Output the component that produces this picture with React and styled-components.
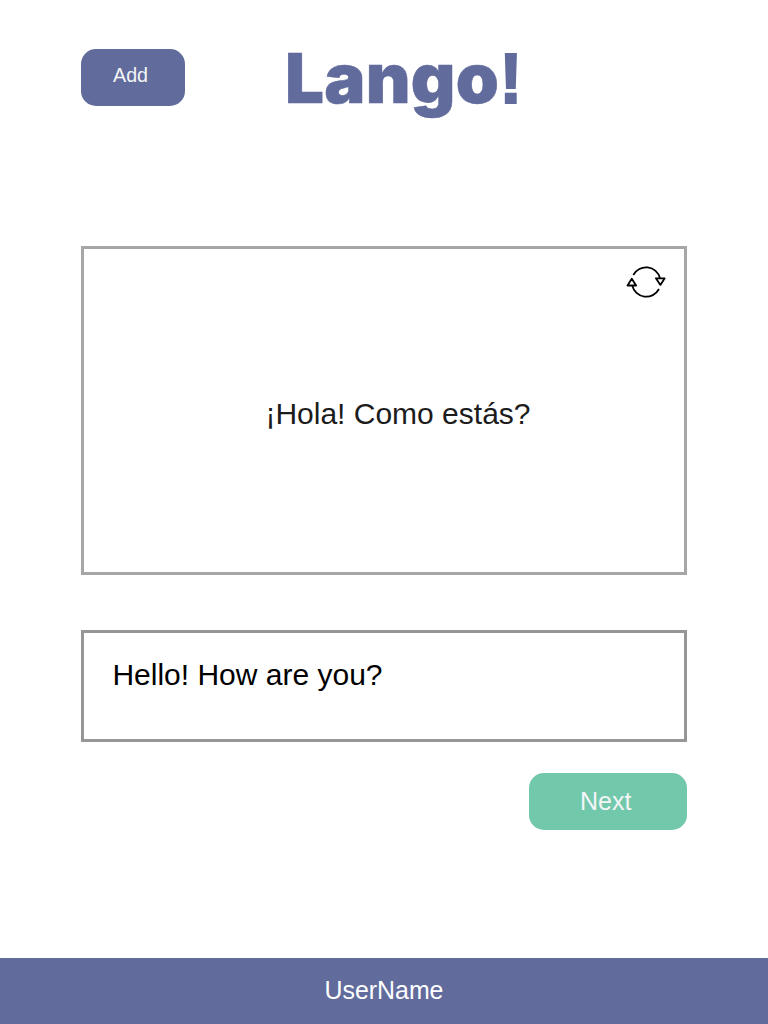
import React from "react";
import styled, { createGlobalStyle } from "styled-components";

const indigo = "#616b9c";
const mint = "#72c8ab";

const GlobalStyle = createGlobalStyle`
  *, *::before, *::after { box-sizing: border-box; }
  body { margin: 0; background: #fff; font-family: "Liberation Sans", Helvetica, Arial, sans-serif; }
  button { font-family: inherit; }
`;

const Screen = styled.div`
  display: flex;
  flex-direction: column;
  width: 768px;
  height: 1024px;
  background: #fff;
`;

const Header = styled.header`
  display: flex;
  align-items: flex-start;
  height: 246px;
  padding: 49px 81px 0;
`;

const Button = styled.button`
  display: flex;
  justify-content: flex-start;
  align-items: flex-start;
  width: ${(p) => p.$width}px;
  height: 57px;
  padding: ${(p) => p.$padding};
  border: 0;
  border-radius: 15px;
  background: ${(p) => p.$color};
  color: #f4f5f7;
  font-size: ${(p) => p.$size}px;
  line-height: 28px;
  white-space: nowrap;
`;

const Logo = styled.h1`
  margin: -13px 0 0 99.5px;
  color: ${indigo};
  font-family: Inter, sans-serif;
  font-size: 69px;
  font-weight: 900;
  line-height: 84px;
  letter-spacing: 0.3px;
  white-space: nowrap;
  -webkit-text-stroke: 0.5px ${indigo};
`;

const Bang = styled.span`
  font-family: "Liberation Sans", Arial, sans-serif;
  font-size: 70px;
  font-weight: 700;
  line-height: 1;
  -webkit-text-stroke: 2px ${indigo};
`;

const Main = styled.main`
  display: flex;
  flex-direction: column;
  flex: 1;
  padding: 0 81px;
`;

const PromptCard = styled.section`
  display: flex;
  flex-direction: column;
  height: 329px;
  margin-left: 0.4px;
  border: 3px solid #a6a6a6;
`;

const FlipButton = styled.button`
  align-self: flex-end;
  width: 40px;
  height: 34px;
  margin: 16px 18px 0 0;
  padding: 0;
  border: 0;
  background: none;

  svg { display: block; }
`;

const Phrase = styled.p`
  margin: 98px 0 0 181px;
  color: #1c1c1c;
  font-size: 30px;
  line-height: 34px;
  white-space: nowrap;
`;

const AnswerBox = styled.section`
  height: 112px;
  margin-top: 55px;
  padding: 25px 28.4px;
  border: 3px solid #969696;
  color: #000;
  font-size: 30px;
  line-height: 34px;
  white-space: nowrap;
`;

const Actions = styled.div`
  display: flex;
  justify-content: flex-end;
  margin-top: 31px;
`;

const Footer = styled.footer`
  display: flex;
  justify-content: center;
  height: 66px;
  padding-top: 18px;
  background: ${indigo};
  color: #fff;
  font-size: 24.9px;
  line-height: 29px;
`;

function FlipIcon() {
  return (
    <svg width="40" height="34" viewBox="0 0 40 34" fill="none" stroke="#000" strokeWidth="1.8">
      <path d="M7.3 10A14.4 14.4 0 0 1 34 13.2" />
      <path d="M33 24A14.4 14.4 0 0 1 6.2 20.4" />
      <path d="M29.9 13.3H38.7L34.4 19.9Z" strokeLinejoin="round" />
      <path d="M1.5 20.5H10.1L5.8 13.8Z" strokeLinejoin="round" />
    </svg>
  );
}

export default function App() {
  return (
    <Screen>
      <GlobalStyle />
      <Header>
        <Button $width={104.4} $padding="12px 0 0 32px" $color={indigo} $size={19.7}>Add</Button>
        <Logo>Lango<Bang>!</Bang></Logo>
      </Header>
      <Main>
        <PromptCard>
          <FlipButton aria-label="Flip card"><FlipIcon /></FlipButton>
          <Phrase>¡Hola! Como estás?</Phrase>
        </PromptCard>
        <AnswerBox>Hello! How are you?</AnswerBox>
        <Actions>
          <Button $width={158.5} $padding="14px 0 0 51.5px" $color={mint} $size={25}>Next</Button>
        </Actions>
      </Main>
      <Footer>UserName</Footer>
    </Screen>
  );
}
